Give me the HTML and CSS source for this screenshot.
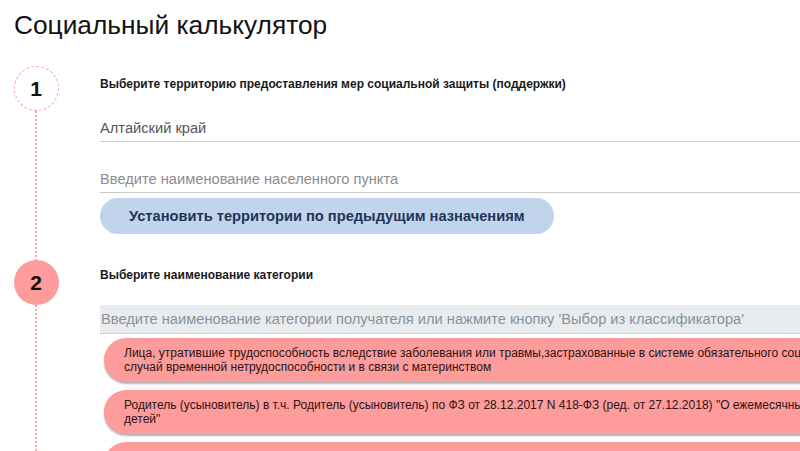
FILE: index.html
```html
<!DOCTYPE html>
<html lang="ru">
<head>
    <meta charset="UTF-8">
    <meta name="viewport" content="width=device-width, initial-scale=1.0">
    <title>Социальный калькулятор</title>
    <link rel="stylesheet" href="styles.css">
</head>
<body>

    <div id="calc">
        <h1 class="calc-title">Социальный калькулятор</h1>

        <!-- шаг 1: территория -->
        <div class="step">
            <div class="rail">
                <div class="step-num">1</div>
                <div class="rail-line"></div>
            </div>
            <div class="step-body step-body-first">
                <h2 class="step-title">Выберите территорию предоставления мер социальной защиты (поддержки)</h2>
                <div class="field field-value">Алтайский край</div>
                <div class="field field-empty">Введите наименование населенного пункта</div>
                <button class="btn-territory">Установить территории по предыдущим назначениям</button>
            </div>
        </div>

        <!-- шаг 2: категория -->
        <div class="step">
            <div class="rail">
                <div class="step-num step-num-active">2</div>
                <div class="rail-line"></div>
            </div>
            <div class="step-body step-body-second">
                <h2 class="step-title">Выберите наименование категории</h2>
                <div class="search">Введите наименование категории получателя или нажмите кнопку 'Выбор из классификатора'</div>
                <div class="category-list">
                    <div class="category">Лица, утратившие трудоспособность вследствие заболевания или травмы,застрахованные в системе обязательного социального страхования на<br>случай временной нетрудоспособности и в связи с материнством</div>
                    <div class="category">Родитель (усыновитель) в т.ч. Родитель (усыновитель) по ФЗ от 28.12.2017 N 418-ФЗ (ред. от 27.12.2018) "О ежемесячных выплатах семьям, имеющим<br>детей"</div>
                    <div class="category category-empty"></div>
                </div>
            </div>
        </div>
    </div>

</body>
</html>
```

FILE: styles.css
```css
body{
    margin: 0;
    overflow: hidden;
    background: #fff;
    font-family: "Liberation Sans", Arial, sans-serif;
    color: #111;
}

#calc{
    height: 451px;
    overflow: hidden;
}

.calc-title{
    margin: 0;
    padding: 10px 14px 0;
    height: 56px;
    font-size: 26.3px;
    font-weight: normal;
    line-height: 30px;
}

.step{
    display: flex;
}

.rail{
    width: 72px;
    flex-shrink: 0;
    display: flex;
    flex-direction: column;
    align-items: center;
}

.step-num{
    width: 43px;
    height: 43px;
    border: 1px dashed #f5a3a3;
    border-radius: 50%;
    display: flex;
    justify-content: center;
    align-items: center;
    font-size: 21px;
    font-weight: bold;
    flex-shrink: 0;
}

.step-num-active{
    background-color: #fe9b9b;
    border-color: #fe9b9b;
}

.rail-line{
    flex: 1;
    width: 2px;
    background: repeating-linear-gradient(to bottom, #f7a6a6 0 2px, transparent 2px 4px);
}

.step-body{
    flex: 1;
    padding-left: 28px;
    min-width: 0;
}

.step-body-first{
    padding-top: 11px;
    padding-bottom: 26px;
}

.step-body-second{
    padding-top: 8px;
    height: 400px;
}

.step-title{
    margin: 0;
    font-size: 12px;
    line-height: 14px;
    font-weight: bold;
    color: #1a1a1a;
}

.field{
    margin-top: 29px;
    padding-bottom: 4px;
    border-bottom: 1px solid #c9c9c9;
    font-size: 11pt;
    line-height: 17px;
    margin-right: -10px;
}

.field-value{
    color: #555;
}

.field-empty{
    color: #8c8c8c;
}

.btn-territory{
    display: block;
    margin-top: 5px;
    height: 36px;
    padding: 0 29px;
    border: 0;
    border-radius: 18px;
    background-color: #c2d4eb;
    color: #1d3559;
    font-family: "Liberation Sans", Arial, sans-serif;
    font-size: 11pt;
    font-weight: bold;
}

.search{
    margin-top: 23px;
    height: 28px;
    line-height: 28px;
    padding-left: 1px;
    background-color: #e9ecef;
    border-bottom: 1px dotted #b9bec3;
    color: #8a9198;
    font-size: 11pt;
    white-space: nowrap;
    margin-right: -10px;
}

.category-list{
    display: flex;
    flex-direction: column;
    gap: 8px;
    margin-top: 4px;
    margin-left: 4px;
    width: 980px;
}

.category{
    padding: 8px 0 8px 20px;
    border-radius: 22px 0 0 22px;
    background-color: #fe9b9b;
    box-shadow: 0 2px 2px rgba(0, 0, 0, 0.3);
    font-size: 12px;
    line-height: 14px;
    color: #2b1414;
    white-space: nowrap;
}

.category-empty{
    height: 28px;
}
```
